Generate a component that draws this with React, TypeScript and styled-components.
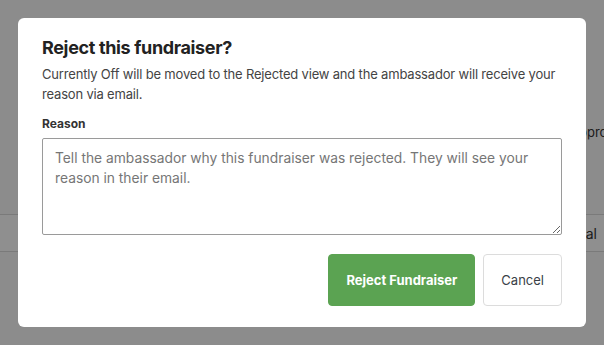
import { FunctionComponent } from 'react';
import styled, { createGlobalStyle } from 'styled-components';

const GlobalStyle = createGlobalStyle`
  html, body {
    margin: 0;
    padding: 0;
    background: #f7f7f7;
  }
  body {
    font-family: Inter, Roboto, "Liberation Sans", sans-serif;
    -webkit-font-smoothing: antialiased;
  }
`;

const Page = styled.div`
  position: relative;
  width: 604px;
  height: 345px;
  overflow: hidden;
  background: #f9f9f9;
`;

const PageHeader = styled.div`
  display: flex;
  justify-content: flex-start;
  height: 215px;
  padding: 123px 0 0 570px;
  box-sizing: border-box;
  border-bottom: 1px solid #dadada;
`;

const PageAction = styled.span`
  font-size: 13px;
  line-height: 18px;
  color: #333;
  white-space: nowrap;
`;

const TableRow = styled.div`
  display: flex;
  justify-content: flex-end;
  align-items: center;
  height: 36px;
  padding-right: 7px;
  background: #ffffff;
  border-bottom: 1px solid #dadada;
`;

const TableCell = styled.span`
  font-size: 14px;
  color: #333;
`;

const Overlay = styled.div`
  position: absolute;
  inset: 0;
  background: rgba(0, 0, 0, 0.44);
  display: flex;
  align-items: flex-start;
  justify-content: center;
  padding-top: 18px;
`;

const Modal = styled.div`
  width: 568px;
  box-sizing: border-box;
  background: #fff;
  border-radius: 6px;
  padding: 19px 24px 21px;
`;

const Title = styled.h2`
  margin: 0;
  font-size: 18px;
  line-height: 22px;
  font-weight: 700;
  letter-spacing: -0.35px;
  color: #222;
`;

const Description = styled.p`
  margin: 5px 0 0;
  font-size: 13px;
  line-height: 20px;
  letter-spacing: -0.18px;
  color: #444;
`;

const Label = styled.label`
  display: block;
  margin-top: 12px;
  font-size: 12px;
  line-height: 16px;
  font-weight: 700;
  color: #333;
`;

const TextArea = styled.textarea`
  display: block;
  width: 100%;
  height: 97px;
  box-sizing: border-box;
  margin-top: 6px;
  padding: 9px 12px;
  border: 1px solid #9a9a9a;
  border-radius: 2px;
  font-family: inherit;
  font-size: 13.8px;
  line-height: 20px;
  color: #333;
  resize: vertical;

  &::placeholder {
    color: #767676;
  }
`;

const Actions = styled.div`
  display: flex;
  justify-content: flex-end;
  gap: 8px;
  margin-top: 19px;
`;

const Button = styled.button<{ $primary?: boolean }>`
  height: 52px;
  padding: 0 17px;
  border-radius: 4px;
  font-family: inherit;
  font-size: 13px;
  font-weight: ${(p) => (p.$primary ? 700 : 400)};
  color: ${(p) => (p.$primary ? '#fff' : '#3a3f47')};
  background: ${(p) => (p.$primary ? '#5ba352' : '#fff')};
  border: 1px solid ${(p) => (p.$primary ? '#5ba352' : '#dcdcdc')};
  cursor: pointer;
`;

const App: FunctionComponent = () => (
  <>
    <GlobalStyle />
    <Page>
      <PageHeader>
        <PageAction>Approve</PageAction>
      </PageHeader>
      <TableRow>
        <TableCell>Total</TableCell>
      </TableRow>
      <Overlay>
        <Modal>
          <Title>Reject this fundraiser?</Title>
          <Description>
            Currently Off will be moved to the Rejected view and the ambassador
            will receive your reason via email.
          </Description>
          <Label htmlFor="reason">Reason</Label>
          <TextArea
            id="reason"
            placeholder="Tell the ambassador why this fundraiser was rejected. They will see your reason in their email."
          />
          <Actions>
            <Button $primary>Reject Fundraiser</Button>
            <Button>Cancel</Button>
          </Actions>
        </Modal>
      </Overlay>
    </Page>
  </>
);

export default App;
